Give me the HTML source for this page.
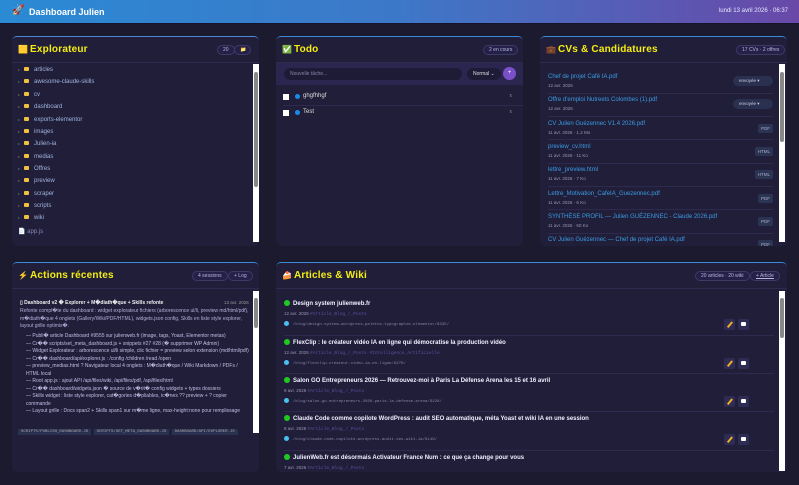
<!DOCTYPE html><html><head><meta charset="utf-8"><style>
*{box-sizing:border-box;margin:0;padding:0}
body{width:799px;height:485px;background:#1b1a2e;font-family:"Liberation Sans",sans-serif;color:#c8c6e0;overflow:hidden;position:relative}
.hdr{position:absolute;left:0;top:0;width:799px;height:24px;background:linear-gradient(90deg,#2a8ad4,#3d78c8 50%,#6a48a8);border-bottom:1px solid #15142a}
.hdr .t{position:absolute;left:29px;top:7px;font-size:9px;font-weight:bold;color:#fff}
.hdr .r{position:absolute;left:12px;top:5px;font-size:10px}
.hdr .d{position:absolute;right:11px;top:8px;font-size:6px;color:#e8e8ff}
.p{position:absolute;background:#211e3a;border-radius:5px;overflow:hidden;border-top:1px solid #3a8ad8}
.ph{height:26px;border-bottom:1px solid #2e2a4e;position:relative}
.ph .ic{position:absolute;left:6px;top:8px;font-size:8px}
.ph .h{position:absolute;left:18px;top:7px;font-size:10px;font-weight:bold;color:#f5ee10;letter-spacing:.2px}
.bd{position:absolute;top:8px;height:10px;border:1px solid #3e3a66;border-radius:6px;font-size:5px;color:#b8b6e0;padding:1px 5px;background:#242048;line-height:7px}
.sb{position:absolute;right:0;width:6px;background:#fff}
.sb i{position:absolute;left:1px;width:4px;background:#888;border-radius:2px}
.fl{position:absolute;left:6px;font-size:6px;color:#9fb4dc}
.fl b{display:inline-block;width:5px;height:4px;background:#f0c040;margin:0 5px 0 4px;border-radius:1px}
.fl s{text-decoration:none;color:#666;font-size:4px}
.cv{position:absolute;left:8px;width:225px}
.cv .n{font-size:6px;color:#3a9be0}
.cv .m{font-size:4.5px;color:#9a98b8;margin-top:3px}
.cv .tg{position:absolute;right:0;top:3px;font-size:4.5px;background:#2c3454;color:#aac;border-radius:2px;padding:2px 3px}
.cv .sl{position:absolute;right:0;top:2px;font-size:4.5px;background:#2a3050;color:#ccd;border-radius:5px;padding:2px 6px;width:40px}
.sep{position:absolute;height:1px;background:#2e2a4e}
.ar{position:absolute;left:8px;width:490px;height:34px}
.ar .n{font-size:6px;font-weight:bold;color:#f0f0ff}
.ar .n b{display:inline-block;width:6px;height:6px;border-radius:3px;background:#22c822;margin-right:3px;vertical-align:-1px}
.ar .m{font-size:4.5px;color:#9a98b8;margin-top:4px}
.ar .m span{color:#5a50a0;font-family:"Liberation Mono",monospace}
.ar .u{font-size:4px;color:#8886a8;margin-top:4px;font-family:"Liberation Mono",monospace}
.ar .u b{display:inline-block;width:5px;height:5px;border-radius:3px;background:#4ac0f0;margin-right:4px;vertical-align:-1px}
.ar .bt{position:absolute;top:19px;width:11px;height:11px;background:#2e2c54;border-radius:2px}
.ar .bt.e::after{content:"";position:absolute;left:5px;top:2px;width:1.5px;height:7px;background:#f0b020;transform:rotate(40deg)}
.ar .bt.v::after{content:"";position:absolute;left:3px;top:3px;width:5px;height:4px;background:#fff;border-radius:1px}
.ac{position:absolute;left:8px;width:232px;font-size:5px;color:#b0aed8;line-height:7.5px}
</style></head><body>
<div class="hdr"><span class="r">🚀</span><span class="t">Dashboard Julien</span><span class="d">lundi 13 avril 2026 · 06:37</span></div>

<div class="p" style="left:12px;top:36px;width:247px;height:210px;border-top-color:#4a8ad8">
<div class="ph"><span class="ic">🟨</span><span class="h">Explorateur</span><span class="bd" style="left:205px">20</span><span class="bd" style="left:222px;width:17px">📁</span></div>
<div class="sb" style="top:27px;height:178px;right:0"><i style="top:8px;height:115px"></i></div>
<div class="fl" style="top:30px"><s>▸</s><b></b>articles</div>
<div class="fl" style="top:42px"><s>▸</s><b></b>awesome-claude-skills</div>
<div class="fl" style="top:55px"><s>▸</s><b></b>cv</div>
<div class="fl" style="top:67px"><s>▸</s><b></b>dashboard</div>
<div class="fl" style="top:80px"><s>▸</s><b></b>exports-elementor</div>
<div class="fl" style="top:92px"><s>▸</s><b></b>images</div>
<div class="fl" style="top:104px"><s>▸</s><b></b>Julien-ia</div>
<div class="fl" style="top:117px"><s>▸</s><b></b>medias</div>
<div class="fl" style="top:129px"><s>▸</s><b></b>Offres</div>
<div class="fl" style="top:141px"><s>▸</s><b></b>preview</div>
<div class="fl" style="top:154px"><s>▸</s><b></b>scraper</div>
<div class="fl" style="top:166px"><s>▸</s><b></b>scripts</div>
<div class="fl" style="top:178px"><s>▸</s><b></b>wiki</div>
<div class="fl" style="top:191px;color:#8a88b8">📄 app.js</div>
</div>

<div class="p" style="left:276px;top:36px;width:247px;height:210px">
<div class="ph"><span class="ic" style="color:#2c2">✅</span><span class="h">Todo</span><span class="bd" style="left:207px">2 en cours</span></div>
<div style="position:absolute;left:0;top:26px;width:247px;height:22px;background:#2a2650"></div>
<div style="position:absolute;left:8px;top:31px;width:178px;height:12px;background:#1e1b36;border-radius:6px;font-size:5px;color:#8886a8;padding:3px 6px">Nouvelle tâche...</div>
<div style="position:absolute;left:191px;top:31px;width:34px;height:12px;background:#1e1b36;border-radius:6px;font-size:5px;color:#ddd;padding:3px 6px">Normal ⌄</div>
<div style="position:absolute;left:227px;top:30px;width:13px;height:13px;background:#7a50c8;border-radius:7px;font-size:6px;color:#fff;text-align:center;line-height:13px">+</div>
<div style="position:absolute;left:7px;top:57px;width:6px;height:6px;background:#fff"></div><div style="position:absolute;left:19px;top:57px;width:5px;height:5px;border-radius:3px;background:#1a8ae8"></div><div style="position:absolute;left:27px;top:56px;font-size:6px;color:#ddd">ghgfhhgf</div><div style="position:absolute;right:11px;top:56px;font-size:5px;color:#888">x</div>
<div class="sep" style="left:7px;top:68px;width:240px"></div>
<div style="position:absolute;left:7px;top:73px;width:6px;height:6px;background:#fff"></div><div style="position:absolute;left:19px;top:73px;width:5px;height:5px;border-radius:3px;background:#1a8ae8"></div><div style="position:absolute;left:27px;top:72px;font-size:6px;color:#ddd">Test</div><div style="position:absolute;right:11px;top:72px;font-size:5px;color:#888">x</div>
</div>

<div class="p" style="left:540px;top:36px;width:247px;height:210px">
<div class="ph"><span class="ic">💼</span><span class="h">CVs &amp; Candidatures</span><span class="bd" style="left:196px">17 CVs · 2 offres</span></div>
<div class="sb" style="top:27px;height:178px;right:2px"><i style="top:8px;height:70px"></i></div>
<div class="cv" style="top:37px"><div class="n">Chef de projet Café IA.pdf</div><div class="m">12 avr. 2026</div><span class="sl">envoyée ▾</span></div>
<div class="sep" style="left:8px;top:56px;width:225px"></div>
<div class="cv" style="top:60px"><div class="n">Offre d'emploi Nutreets Colombes (1).pdf</div><div class="m">12 avr. 2026</div><span class="sl">envoyée ▾</span></div>
<div class="sep" style="left:8px;top:79px;width:225px"></div>
<div class="cv" style="top:84px"><div class="n">CV Julien Guézennec V1.4 2026.pdf</div><div class="m">11 avr. 2026 · 1.2 Mo</div><span class="tg">PDF</span></div>
<div class="sep" style="left:8px;top:102px;width:225px"></div>
<div class="cv" style="top:107px"><div class="n">preview_cv.html</div><div class="m">11 avr. 2026 · 11 Ko</div><span class="tg">HTML</span></div>
<div class="sep" style="left:8px;top:126px;width:225px"></div>
<div class="cv" style="top:130px"><div class="n">lettre_preview.html</div><div class="m">11 avr. 2026 · 7 Ko</div><span class="tg">HTML</span></div>
<div class="sep" style="left:8px;top:149px;width:225px"></div>
<div class="cv" style="top:154px"><div class="n">Lettre_Motivation_CafeIA_Guezennec.pdf</div><div class="m">11 avr. 2026 · 6 Ko</div><span class="tg">PDF</span></div>
<div class="sep" style="left:8px;top:172px;width:225px"></div>
<div class="cv" style="top:177px"><div class="n">SYNTHÈSE PROFIL — Julien GUÉZENNEC - Claude 2026.pdf</div><div class="m">11 avr. 2026 · 60 Ko</div><span class="tg">PDF</span></div>
<div class="sep" style="left:8px;top:196px;width:225px"></div>
<div class="cv" style="top:200px"><div class="n">CV Julien Guézennec — Chef de projet Café IA.pdf</div><span class="tg">PDF</span></div>
</div>

<div class="p" style="left:12px;top:262px;width:247px;height:210px">
<div class="ph"><span class="ic">⚡</span><span class="h">Actions récentes</span><span class="bd" style="left:180px">4 sessions</span><span class="bd" style="left:216px">+ Log</span></div>
<div class="sb" style="top:28px;height:142px;right:0"><i style="top:7px;height:30px"></i></div>
<div style="position:absolute;left:8px;top:37px;font-size:5px;font-weight:bold;color:#eee">▯ Dashboard v2 � Explorer + M�diath�que + Skills refonte</div>
<div style="position:absolute;left:212px;top:37px;font-size:4.5px;color:#999">13 avr. 2026</div>
<div class="ac" style="top:45px">Refonte compl�te du dashboard : widget explorateur fichiers (arborescence ul/li, preview md/html/pdf), m�diath�que 4 onglets (Gallery/Wiki/PDF/HTML), widgets.json config, Skills en liste style explorer, layout grille optimis�.</div>
<div class="ac" style="top:70px;left:14px;width:226px;color:#c0bee0">— Publi� article Dashboard #9555 sur julienweb.fr (image, tags, Yoast, Elementor metas)<br>— Cr�� scripts/set_meta_dashboard.js + snippets #27 #28 (� supprimer WP Admin)<br>— Widget Explorateur : arborescence ul/li simple, clic fichier = preview selon extension (md/html/pdf)<br>— Cr�� dashboard/api/explorer.js : /config /children /read /open<br>— preview_medias.html ? Navigateur local 4 onglets : M�diath�que / Wiki Markdown / PDFs / HTML local<br>— Root app.js : ajout API /api/files/wiki, /api/files/pdf, /api/files/html<br>— Cr�� dashboard/widgets.json � source de v�rit� config widgets + types dossiers<br>— Skills widget : liste style explorer, cat�gories d�pliables, ic�nes ?? preview + ? copier commande<br>— Layout grille : Docs span2 + Skills span1 sur m�me ligne, max-height:none pour remplissage</div>
<div style="position:absolute;left:6px;top:167px;font-size:4px;color:#aaa;font-family:'Liberation Mono',monospace;white-space:nowrap"><span style="background:#2a3050;padding:1px 3px">SCRIPTS/PUBLISH_DASHBOARD.JS</span> <span style="background:#2a3050;padding:1px 3px">SCRIPTS/SET_META_DASHBOARD.JS</span> <span style="background:#2a3050;padding:1px 3px">DASHBOARD/API/EXPLORER.JS</span></div>
</div>

<div class="p" style="left:276px;top:262px;width:511px;height:210px">
<div class="ph"><span class="ic">🍰</span><span class="h">Articles &amp; Wiki</span><span class="bd" style="left:419px">20 articles · 20 wiki</span><span class="bd" style="left:474px;text-decoration:underline">+ Article</span></div>
<div class="sb" style="top:28px;height:180px;right:2px"><i style="top:7px;height:40px"></i></div>
<div class="ar" style="top:37px"><div class="n"><b></b>Design system julienweb.fr</div><div class="m">12 avr. 2026 <span>#Article_Blog_/_Posts</span></div><div class="u"><b></b>/blog/design-system-wordpress-palette-typographie-elementor/9335/</div><span class="bt e" style="left:440px"></span><span class="bt v" style="left:454px"></span></div>
<div class="sep" style="left:8px;top:72px;width:490px"></div>
<div class="ar" style="top:76px"><div class="n"><b></b>FlexClip : le créateur vidéo IA en ligne qui démocratise la production vidéo</div><div class="m">12 avr. 2026 <span>#Article_Blog_/_Posts #Intelligence_Artificielle</span></div><div class="u"><b></b>/blog/flexclip-createur-video-ia-en-ligne/9276/</div><span class="bt e" style="left:440px"></span><span class="bt v" style="left:454px"></span></div>
<div class="sep" style="left:8px;top:110px;width:490px"></div>
<div class="ar" style="top:114px"><div class="n"><b></b>Salon GO Entrepreneurs 2026 — Retrouvez-moi à Paris La Défense Arena les 15 et 16 avril</div><div class="m">9 avr. 2026 <span>#Article_Blog_/_Posts</span></div><div class="u"><b></b>/blog/salon-go-entrepreneurs-2026-paris-la-defense-arena/9228/</div><span class="bt e" style="left:440px"></span><span class="bt v" style="left:454px"></span></div>
<div class="sep" style="left:8px;top:148px;width:490px"></div>
<div class="ar" style="top:152px"><div class="n"><b></b>Claude Code comme copilote WordPress : audit SEO automatique, méta Yoast et wiki IA en une session</div><div class="m">8 avr. 2026 <span>#Article_Blog_/_Posts</span></div><div class="u"><b></b>/blog/claude-code-copilote-wordpress-audit-seo-wiki-ia/9149/</div><span class="bt e" style="left:440px"></span><span class="bt v" style="left:454px"></span></div>
<div class="sep" style="left:8px;top:187px;width:490px"></div>
<div class="ar" style="top:191px"><div class="n"><b></b>JulienWeb.fr est désormais Activateur France Num : ce que ça change pour vous</div><div class="m">7 avr. 2026 <span>#Article_Blog_/_Posts</span></div></div>
</div>
</body></html>
